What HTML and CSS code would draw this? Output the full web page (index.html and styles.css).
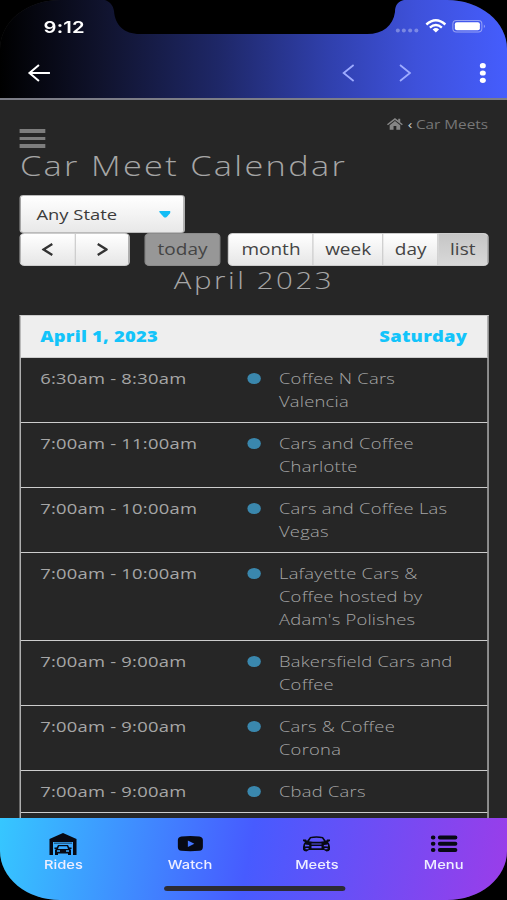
FILE: index.html
```html
<!DOCTYPE html>
<html lang="en">
<head>
<meta charset="utf-8">
<title>Car Meet Calendar</title>
<link rel="stylesheet" href="styles.css">
</head>
<body>
<div class="device">
  <header class="topbar">
    <svg class="notch" viewBox="0 0 507 36" preserveAspectRatio="none"><path d="M105 0C110 2 113 5 114 11C115 25 124 34 140 34H367C383 34 393 26 395 12C395 4 399 1 404 0Z"/></svg>
    <div class="status">
      <span class="clock">9:12</span>
      <svg class="status-icons" viewBox="0 0 94 16" preserveAspectRatio="none">
        <g fill="#fff" fill-opacity=".32"><circle cx="3.5" cy="12.5" r="2"/><circle cx="9.5" cy="12.5" r="2"/><circle cx="15.800" cy="12.500" r="2"/><circle cx="22" cy="12.500" r="2"/></g>
        <g fill="none" stroke="#fff" stroke-width="2.400"><path d="M32 6.500Q41.500-2 51 6.500"/><path d="M35.500 9.700Q41.500 4.500 47.500 9.700"/></g>
        <path fill="#fff" d="M38.300 11.400Q41.500 8.700 44.700 11.400L41.500 14.400Z"/>
        <rect x="58.500" y="2.500" width="29" height="11.500" rx="3.500" fill="none" stroke="#fff" stroke-opacity=".45"/>
        <rect x="60.500" y="4.300" width="25" height="8" rx="2" fill="#fff"/>
        <path d="M89.500 6.500Q91.500 8.300 89.500 10Z" fill="#fff" fill-opacity=".5"/>
      </svg>
    </div>
    <nav class="nav">
      <svg class="back" viewBox="0 0 24 20" preserveAspectRatio="none"><path d="M12 2L2.500 10L12 18M2.500 10H23"/></svg>
      <svg class="chev prev" viewBox="0 0 14 20" preserveAspectRatio="none"><path d="M12 2L2 10L12 18"/></svg>
      <svg class="chev next" viewBox="0 0 14 20" preserveAspectRatio="none"><path d="M2 2L12 10L2 18"/></svg>
      <svg class="dots" viewBox="0 0 8 20" preserveAspectRatio="none"><ellipse cx="4" cy="2.700" rx="3" ry="2.600"/><ellipse cx="4" cy="10" rx="3" ry="2.600"/><ellipse cx="4" cy="17.300" rx="3" ry="2.600"/></svg>
    </nav>
  </header>

  <main class="page">
    <div class="tools">
      <div class="burger"><i></i><i></i><i></i></div>
      <div class="crumbs">
        <svg class="home" viewBox="0 0 16 12" preserveAspectRatio="none"><path d="M8 0L0 6.300L1 7.300L8 1.900L15 7.300L16 6.300L13.300 4.200V.800H11.300V2.600ZM8 3L2.700 7.200V11.700H6.600V8H9.400V11.700H13.300V7.200Z"/></svg>
        <span class="sep">‹</span><span>Car Meets</span>
      </div>
    </div>
    <h1>Car Meet Calendar</h1>
    <div class="select"><span>Any State</span><svg viewBox="0 0 12 7" preserveAspectRatio="none"><path d="M0 0H12V1L7.500 6Q6 7 4.500 6L0 1Z"/></svg></div>
    <div class="buttons">
      <div class="group arrows">
        <span><svg viewBox="0 0 12 13" preserveAspectRatio="none"><path d="M11 1L2 6.500L11 12"/></svg></span>
        <span><svg viewBox="0 0 12 13" preserveAspectRatio="none"><path d="M1 1L10 6.500L1 12"/></svg></span>
      </div>
      <div class="today">today</div>
      <div class="group views"><span class="month">month</span><span class="week">week</span><span class="day">day</span><span class="list">list</span></div>
    </div>
    <h2>April 2023</h2>
    <section class="agenda">
      <div class="date"><b>April 1, 2023</b><b>Saturday</b></div>
      <div class="event"><span>6:30am - 8:30am</span><i></i><p>Coffee N Cars<br>Valencia</p></div>
      <div class="event"><span>7:00am - 11:00am</span><i></i><p>Cars and Coffee<br>Charlotte</p></div>
      <div class="event"><span>7:00am - 10:00am</span><i></i><p>Cars and Coffee Las<br>Vegas</p></div>
      <div class="event"><span>7:00am - 10:00am</span><i></i><p>Lafayette Cars &amp;<br>Coffee hosted by<br>Adam's Polishes</p></div>
      <div class="event"><span>7:00am - 9:00am</span><i></i><p>Bakersfield Cars and<br>Coffee</p></div>
      <div class="event"><span>7:00am - 9:00am</span><i></i><p>Cars &amp; Coffee<br>Corona</p></div>
      <div class="event"><span>7:00am - 9:00am</span><i></i><p>Cbad Cars</p></div>
      <div class="rest"></div>
    </section>
  </main>

  <footer class="tabs">
    <div class="tab"><svg viewBox="0 0 28 24" preserveAspectRatio="none"><path d="M.500 7L14 1L27.500 7V23H24V10H4V23H.500Z"/><path d="M5 10.500H23V12H5Z" fill-opacity=".45"/><path fill-rule="evenodd" d="M9 13H19L21 17L22 18V23H19V21.500H9V23H6V18L7 17ZM10 14.300L9 17H19L18 14.300ZM8 18.300V19.800H11V18.300ZM17 18.300V19.800H20V18.300Z"/><path d="M5.500 15.500H8V17H5.500ZM20 15.500H22.500V17H20Z"/></svg><span>Rides</span></div>
    <div class="tab"><svg viewBox="0 0 28 24" preserveAspectRatio="none"><path fill-rule="evenodd" d="M5 4.500Q14 3.700 23 4.500Q26.500 5 26.500 8V15Q26.500 18.500 23 18.800Q14 19.500 5 18.800Q1.500 18.500 1.500 15V8Q1.500 5 5 4.500ZM11.500 8.500V15L18 11.800Z"/></svg><span>Watch</span></div>
    <div class="tab"><svg viewBox="0 0 28 24" preserveAspectRatio="none"><path fill-rule="evenodd" d="M7.500 5Q14 3.500 20.500 5L23.500 9L24.500 7.500H27.500V9L25.500 10Q27.500 12 27.500 15V17.500Q27 19.500 24 19.500L21.500 18H6.500L4 19.500Q1 19.500 .500 17.500V15Q.500 12 2.500 10L.500 9V7.500H3.500L4.500 9ZM8.500 6.200L6.500 9.300Q14 10.300 21.500 9.300L19.500 6.200Q14 5.200 8.500 6.200ZM2.500 12.500V14.500L7 14.200L6.500 13ZM25.500 12.500L21.500 13L21 14.200L25.500 14.500ZM9 11.500V12.400H19V11.500ZM9 14V16.200H19V14ZM3 16V17.200H6V16ZM22 16V17.200H25V16Z"/></svg><span>Meets</span></div>
    <div class="tab"><svg viewBox="0 0 28 24" preserveAspectRatio="none"><g stroke="#070914" stroke-width="4" stroke-linecap="round"><path d="M3 5.500H3.600M10 5.500H25.500M3 11.700H3.600M10 11.700H25.500M3 18H3.600M10 18H25.500"/></g></svg><span>Menu</span></div>
    <div class="handle"></div>
  </footer>
</div>
</body>
</html>
```
FILE: styles.css
```css
* { box-sizing: border-box; }
html { background: #000; }
body { margin: 0; width: 507px; height: 900px; overflow: hidden; background: #000; }
h1, h2, p { margin: 0; font-weight: 300; }
svg { display: block; }

.device {
  width: 414px; height: 900px;
  transform: scaleX(1.22464); transform-origin: 0 0;
  display: flex; flex-direction: column;
  overflow: hidden; border-radius: 49px;
  background: #262626; color: #a6a6a6;
  font-family: "Open Sans", "Noto Sans", sans-serif;
}

.topbar {
  position: relative; flex: none; height: 100px;
  background: linear-gradient(90deg, #000 0%, #10132d 20%, #1e2767 43%, #3040ad 65%, #3e51da 82%, #455dfd 100%);
  border-bottom: 2px solid #7c7d87;
}
.notch { position: absolute; top: 0; left: 0; width: 414px; height: 36px; }
.status { position: relative; display: flex; justify-content: space-between; padding: 17px 15px 0 35.500px; height: 46px; }
.clock { font: 600 16.500px/20px Inter, sans-serif; color: #fff; letter-spacing: .2px; }
.status-icons { width: 76.800px; height: 16px; margin-top: 1px; }
.nav { display: flex; align-items: center; height: 54px; padding-left: 21.500px; }
.nav svg { height: 20px; fill: none; stroke: #fff; stroke-width: 2; }
.nav .back { width: 19.600px; }
.nav .chev { width: 11.400px; stroke: #9dabff; stroke-width: 1.800; }
.nav .prev { margin-left: 238px; }
.nav .next { margin-left: 34.500px; }
.nav .dots { width: 6.500px; margin-left: 54.500px; fill: #fff; stroke: none; }

.page { flex: none; height: 718px; padding: 0 15.500px 0 16.300px; overflow: hidden; }
.tools { display: flex; justify-content: space-between; height: 49px; }
.burger { display: grid; gap: 4px; align-content: start; padding-top: 29px; }
.burger i { width: 20.500px; height: 3.500px; background: #7d7d7d; }
.crumbs { display: flex; align-items: center; height: 20px; margin-top: 14px; font-size: 12.500px; color: #777; }
.home { width: 13px; height: 12px; fill: #858585; }
.sep { margin: 0 3px 0 4px; color: #ccc; }
h1 { font-size: 28px; line-height: 32px; letter-spacing: 1.900px; white-space: nowrap; }
.select {
  display: flex; align-items: center; justify-content: space-between;
  width: 135px; height: 38px; margin-top: 14px; padding: 0 11px 0 12.500px;
  border: 1px solid #bbb; border-radius: 3px;
  background: linear-gradient(#fff, #e8e8e8); color: #3b3b3b; font-size: 15px;
}
.select svg { width: 9.800px; height: 7px; fill: #13bdf5; }
.buttons { display: flex; height: 33px; font-size: 15.500px; line-height: 31px; color: #444; text-align: center; }
.group { display: flex; border-radius: 4px; overflow: hidden; background: linear-gradient(#fff, #e6e6e6); border: 1px solid #ccc; }
.group span + span { border-left: 1px solid #ccc; }
.arrows { width: 90px; }
.arrows span { flex: 1; display: grid; place-items: center; }
.arrows svg { width: 9.500px; height: 13px; fill: none; stroke: #333; stroke-width: 2.400; }
.today { width: 61.500px; margin: 0 6.500px 0 12px; border: 1px solid #8b8b8b; border-radius: 4px; background: #979797; }
.views { flex: 1; }
.month { width: 68px; }
.week { width: 57px; }
.day { width: 45px; }
.list { flex: 1; background: linear-gradient(#c6c6c6, #d8d8d8); }
h2 { height: 49px; font-size: 24px; line-height: 28px; letter-spacing: 2.100px; text-align: center; white-space: nowrap; }

.agenda { border: 1px solid #ccc; border-bottom: 0; font-size: 15px; letter-spacing: .2px; }
.date {
  display: flex; justify-content: space-between; height: 42px; padding: 0 16px 0 15.500px;
  background: #eee; border-bottom: 1px solid #ccc; color: #13c4fa; line-height: 41px;
}
.date b { font-weight: 800; }
.event { display: grid; grid-template-columns: 169px 26px 1fr; padding: 9px 0 9px 15.500px; border-bottom: 1px solid #ccc; line-height: 23px; white-space: nowrap; }
.event i { width: 11px; height: 11px; margin-top: 6px; border-radius: 50%; background: #3a87ad; }
.rest { height: 10px; }

.tabs {
  position: relative; flex: none; display: flex; height: 82px;
  background: linear-gradient(98deg, #36c7ff 0%, #475bff 49%, #9b3de9 100%);
}
.tab { flex: 1; display: flex; flex-direction: column; align-items: center; padding-top: 14px; color: #eef; font: 500 12px/16px Inter, sans-serif; }
.tab svg { width: 22.900px; height: 24px; fill: #070914; }
.tab span { margin-top: 1px; }
.handle { position: absolute; bottom: 9px; left: 133.500px; width: 148px; height: 5.500px; border-radius: 3px; background: #2c2b35; }
```
